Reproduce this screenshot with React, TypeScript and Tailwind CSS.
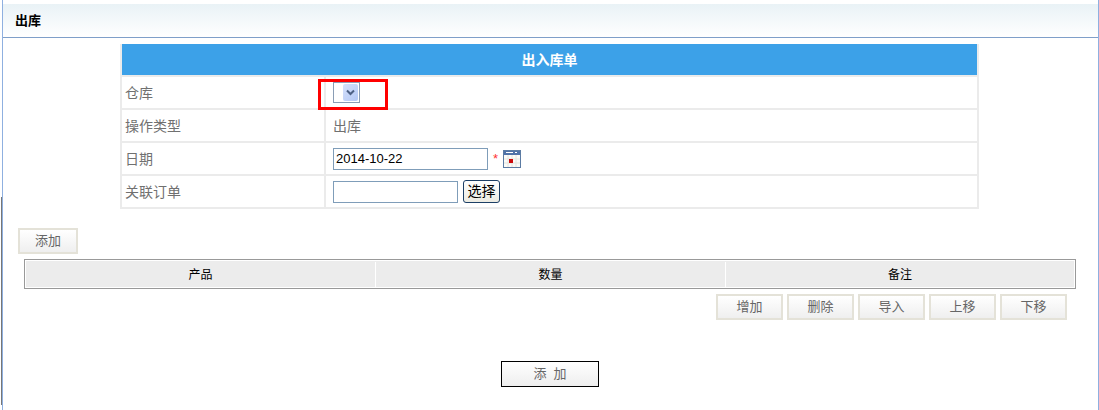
const font = { fontFamily: '"Liberation Sans", "Noto Sans CJK SC", sans-serif' };

function GrayButton({ label, className }: { label: string; className: string }) {
  return (
    <button className={"h-[26px] border-2 border-[#e4e2d8] bg-gradient-to-b from-white to-[#efefef] text-[13px] text-[#666] " + className}>
      {label}
    </button>
  );
}

function FormRow({ label, children }: { label: string; children: React.ReactNode }) {
  return (
    <div className="flex h-[33px] border-b-[2px] border-[#ebebeb]">
      <div className="flex w-[204px] items-center border-r-[2px] border-[#ebebeb] pl-[3px] pt-[2px] text-[14px] text-[#707070]">{label}</div>
      <div className="flex flex-1 items-center pl-[7px] text-[14px] text-[#707070]">{children}</div>
    </div>
  );
}

function CalendarIcon() {
  return (
    <svg width="18" height="18" viewBox="0 0 18 18" className="ml-[5px]">
      <rect x="0.5" y="0.5" width="17" height="17" fill="#fbfbf8" stroke="#5b7ba3" />
      <rect x="1" y="1" width="16" height="4" fill="#4f72a8" />
      <rect x="3" y="2" width="7" height="1" fill="#fff" />
      <rect x="12" y="2" width="2" height="1" fill="#fff" />
      <path d="M1 9h16M1 13h16M5 5v12M9 5v12M13 5v12" stroke="#e4e4de" />
      <rect x="6" y="9" width="4" height="4" fill="#cc0a0a" />
    </svg>
  );
}

export default function App() {
  return (
    <div className="relative h-[410px] w-[1099px] overflow-hidden bg-white pl-[2px]" style={font}>
      {/* dark strip on the left edge */}
      <div className="absolute left-px top-[197px] h-[208px] w-px bg-[#777]" />
      <div className="h-full w-[1097px] border-x border-x-[#8fb0e0] pt-[4px]">
        <div className="flex h-[34px] items-center border-b border-[#7f9fc9] bg-gradient-to-b from-[#e9f2f6] to-white pl-[12px] text-[13px] font-bold text-black">
          出库
        </div>

        <div className="ml-[117px] mt-[6px] w-[859px] border-x-[2px] border-[#ebebeb]">
          <div className="flex h-[33px] items-center justify-center border-b-[2px] border-[#ebebeb] bg-[#3ca1e8] pt-px text-[14px] font-bold text-white">
            出入库单
          </div>
          <FormRow label="仓库">
            <div className="relative">
              <div className="flex h-[21px] w-[27px] items-center justify-end border border-[#8a9db5] bg-white pr-px">
                <div className="flex h-[17px] w-[15px] items-center justify-center rounded-[2px] bg-gradient-to-br from-[#d5e0fb] to-[#b3c8f5]">
                  <svg width="9" height="7" viewBox="0 0 9 7">
                    <path d="M1 1.5l3.5 3.5 3.5-3.5" fill="none" stroke="#4d6185" strokeWidth="2" />
                  </svg>
                </div>
              </div>
              <div className="absolute left-[-15px] top-[-3px] h-[31px] w-[70px] border-[3px] border-[#ff0000]" />
            </div>
          </FormRow>
          <FormRow label="操作类型">
            <span className="pt-[2px]">出库</span>
          </FormRow>
          <FormRow label="日期">
            <input
              readOnly
              value="2014-10-22"
              className="h-[22px] w-[155px] border border-[#7f9db9] pl-[2px] text-[13px] text-black outline-none"
            />
            <span className="ml-[5px] text-[13px] text-[#ff3333]">*</span>
            <CalendarIcon />
          </FormRow>
          <FormRow label="关联订单">
            <input className="h-[22px] w-[125px] border border-[#7f9db9] outline-none" />
            <button className="ml-[5px] h-[23px] w-[37px] rounded-[3px] border border-[#1c3f66] bg-gradient-to-b from-white to-[#ecebe2] pb-px text-[14px] text-black">
              选择
            </button>
          </FormRow>
        </div>

        <div className="ml-[15px] mt-[19px]">
          <GrayButton label="添加" className="block w-[60px]" />
        </div>

        <div className="ml-[21px] mt-[5px] h-[30px] w-[1052px] border border-[#999] bg-white p-px">
          <div className="flex h-full bg-[#ececec] pt-px text-[12px] text-black">
            <div className="flex w-[350px] items-center justify-center border-r border-white">产品</div>
            <div className="flex w-[350px] items-center justify-center border-r border-white">数量</div>
            <div className="flex flex-1 items-center justify-center">备注</div>
          </div>
        </div>

        <div className="ml-[713px] mt-[5px] flex gap-[4px]">
          {["增加", "删除", "导入", "上移", "下移"].map((label) => (
            <GrayButton key={label} label={label} className="w-[67px]" />
          ))}
        </div>

        <div className="ml-[498px] mt-[41px]">
          <button className="h-[26px] w-[98px] border border-black bg-gradient-to-b from-white to-[#eeeeee] text-[13px] text-[#666]">
            添&nbsp;&nbsp;加
          </button>
        </div>
      </div>
    </div>
  );
}
